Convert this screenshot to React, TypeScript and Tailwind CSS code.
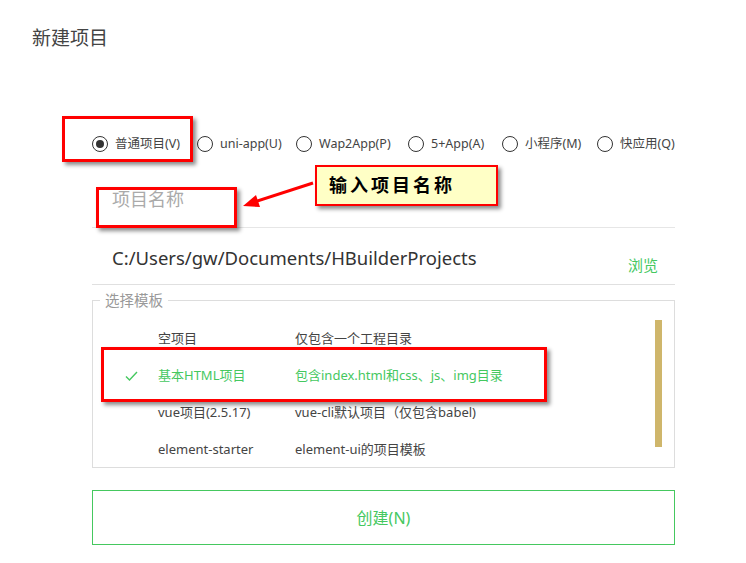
const font = { fontFamily: '"Noto Sans", "Noto Sans CJK SC", sans-serif' };

const radios = [
  { label: "普通项目(V)", checked: true, w: "w-[105px]" },
  { label: "uni-app(U)", w: "w-[99px]" },
  { label: "Wap2App(P)", w: "w-[112px]" },
  { label: "5+App(A)", w: "w-[94px]" },
  { label: "小程序(M)", w: "w-[95px]" },
  { label: "快应用(Q)", w: "w-[80px]" },
];

const templates = [
  { name: "空项目", desc: "仅包含一个工程目录" },
  { name: "基本HTML项目", desc: "包含index.html和css、js、img目录", active: true },
  { name: "vue项目(2.5.17)", desc: "vue-cli默认项目（仅包含babel)" },
  { name: "element-starter", desc: "element-ui的项目模板" },
];

const Radio = ({ checked }: { checked?: boolean }) => (
  <span className="flex h-[16px] w-[16px] shrink-0 items-center justify-center rounded-full border-[1.5px] border-[#333]">
    {checked && <span className="h-[8px] w-[8px] rounded-full bg-[#333]" />}
  </span>
);

const App = () => {
  return (
    <div className="relative h-[563px] w-[746px] overflow-hidden bg-white text-[#333]" style={font}>
      {/* title */}
      <div className="pl-[32px] pt-[25px] text-[19px] leading-[26px] text-[#444]">新建项目</div>

      <div className="ml-[92px] mt-[83px] w-[583px]">
        {/* project types */}
        <div className="flex h-[20px] items-center whitespace-nowrap text-[12.5px] leading-[20px] text-[#444]">
          {radios.map((r, i) => (
            <div key={i} className={`flex shrink-0 items-center gap-[7px] ${r.w}`}>
              <Radio checked={r.checked} />
              <span>{r.label}</span>
            </div>
          ))}
        </div>

        {/* name input */}
        <div className="flex h-[74px] items-end border-b border-[#e6e6e6] pb-[16px] pl-[20px]">
          <span className="text-[18px] leading-[24px] text-[#aaa]">项目名称</span>
        </div>

        {/* location */}
        <div className="flex h-[57px] items-start justify-between border-b border-[#e0e0e0] pl-[20px] pr-[17px]">
          <span className="mt-[17px] text-[18.5px] leading-[26px] text-[#333]">
            C:/Users/gw/Documents/HBuilderProjects
          </span>
          <span className="mt-[27px] text-[15px] leading-[20px] text-[#45c85f]">浏览</span>
        </div>

        {/* templates */}
        <fieldset className="relative mt-[5px] h-[178px] border border-[#ddd] pt-[10px]">
          <legend className="ml-[7px] px-[5px] text-[14.5px] leading-[20px] text-[#999]">选择模板</legend>
          <div className="flex flex-col">
            {templates.map((t, i) => (
              <div
                key={i}
                className={`flex h-[37px] items-center text-[13px] ${t.active ? "text-[#45c85f]" : "text-[#444]"}`}
              >
                <span className="flex w-[65px] justify-end pr-[20px]">
                  {t.active && (
                    <svg width="13" height="10" viewBox="0 0 13 10" fill="none">
                      <path d="M1 5.5 L4.5 9 L12 1" stroke="#45c85f" strokeWidth="1.4" />
                    </svg>
                  )}
                </span>
                <span className="w-[137px]">{t.name}</span>
                <span>{t.desc}</span>
              </div>
            ))}
          </div>
          <div className="absolute right-[12px] top-[10px] h-[127px] w-[7px] bg-[#cfb66b]" />
        </fieldset>

        {/* create button */}
        <button className="mt-[22px] flex h-[55px] w-full items-center justify-center border border-[#45c85f] text-[16px] text-[#45c85f]">
          创建(N)
        </button>
      </div>

      {/* annotations */}
      <div className="absolute left-[62px] top-[116px] h-[46px] w-[131px] border-[3px] border-[#ff0000] shadow-[3px_3px_4px_rgba(0,0,0,0.45)]" />
      <div className="absolute left-[96px] top-[187px] h-[41px] w-[141px] border-[3px] border-[#ff0000] shadow-[3px_3px_4px_rgba(0,0,0,0.45)]" />
      <div className="absolute left-[101px] top-[347px] h-[55px] w-[446px] border-[3px] border-[#ff0000] shadow-[3px_3px_4px_rgba(0,0,0,0.45)]" />

      <div className="absolute left-[315px] top-[165px] flex h-[41px] w-[183px] items-center border-2 border-[#ff0000] bg-[#ffffc6] pl-[12px] text-[18px] font-bold tracking-[3px] text-black shadow-[3px_3px_4px_rgba(0,0,0,0.45)]">
        输入项目名称
      </div>

      <svg className="absolute left-[238px] top-[176px]" width="80" height="36" viewBox="0 0 80 36">
        <line x1="75" y1="7" x2="16" y2="26" stroke="#ff0000" strokeWidth="3" />
        <polygon points="5,30 18,19 22,31" fill="#ff0000" />
      </svg>
    </div>
  );
};

export default App;
